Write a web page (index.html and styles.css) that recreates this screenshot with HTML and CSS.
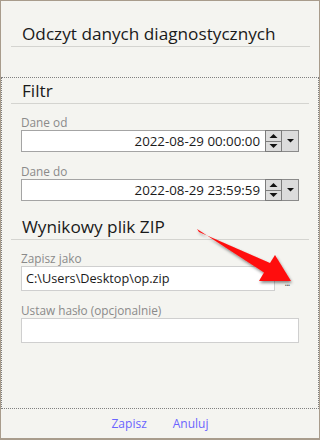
FILE: index.html
```html
<!DOCTYPE html>
<html lang="pl">
<head>
<meta charset="utf-8">
<title>Odczyt danych diagnostycznych</title>
<link rel="stylesheet" href="styles.css">
</head>
<body>
<div class="window">
  <h1 class="title">Odczyt danych diagnostycznych</h1>
  <div class="panel">
    <h2 class="section">Filtr</h2>
    <div class="field">
      <label class="label">Dane od</label>
      <div class="date-row">
        <div class="date-box">2022-08-29 00:00:00</div>
        <div class="spin">
          <span class="spin-btn"><svg width="9" height="6" viewBox="0 0 9 6"><path d="M0.5 5 L4.5 1 L8.5 5 Z" fill="#111"/></svg></span>
          <span class="spin-btn"><svg width="9" height="6" viewBox="0 0 9 6"><path d="M0.5 1 L4.5 5 L8.5 1 Z" fill="#111"/></svg></span>
        </div>
        <div class="drop"><svg width="9" height="6" viewBox="0 0 9 6"><path d="M1 1 L4.5 4.5 L8 1 Z" fill="#111"/></svg></div>
      </div>
    </div>
    <div class="field">
      <label class="label">Dane do</label>
      <div class="date-row">
        <div class="date-box">2022-08-29 23:59:59</div>
        <div class="spin">
          <span class="spin-btn"><svg width="9" height="6" viewBox="0 0 9 6"><path d="M0.5 5 L4.5 1 L8.5 5 Z" fill="#111"/></svg></span>
          <span class="spin-btn"><svg width="9" height="6" viewBox="0 0 9 6"><path d="M0.5 1 L4.5 5 L8.5 1 Z" fill="#111"/></svg></span>
        </div>
        <div class="drop"><svg width="9" height="6" viewBox="0 0 9 6"><path d="M1 1 L4.5 4.5 L8 1 Z" fill="#111"/></svg></div>
      </div>
    </div>
    <h2 class="section section-zip">Wynikowy plik ZIP</h2>
    <div class="field">
      <label class="label">Zapisz jako</label>
      <div class="file-row">
        <div class="text-box text-grow">C:\Users\Desktop\op.zip</div>
        <span class="browse">...</span>
      </div>
    </div>
    <div class="field">
      <label class="label">Ustaw hasło (opcjonalnie)</label>
      <div class="text-box"></div>
    </div>
  </div>
  <div class="footer">
    <span class="link">Zapisz</span>
    <span class="link">Anuluj</span>
  </div>
  <svg class="arrow" width="320" height="440" viewBox="0 0 320 440">
    <defs>
      <filter id="sh" x="-20%" y="-20%" width="140%" height="140%">
        <feDropShadow dx="1" dy="2" stdDeviation="1.6" flood-color="#000" flood-opacity="0.45"/>
      </filter>
    </defs>
    <polygon points="197,229 199,232 270,263 275,255 291,281 259,281 264,272.5" fill="#ff0d0d" filter="url(#sh)"/>
  </svg>
</div>
</body>
</html>
```

FILE: styles.css
```css
* { box-sizing: border-box; }
html, body { margin: 0; padding: 0; }
body {
  width: 320px;
  height: 440px;
  font-family: "Open Sans", "Noto Sans", sans-serif;
  background: #f4f4f0;
}
.window {
  position: relative;
  width: 320px;
  height: 440px;
  background: #f4f4f0;
  border: 1px solid #a89c8c;
  border-bottom-width: 2px;
  display: flex;
  flex-direction: column;
}
.title {
  margin: 21px 9px 0 10px;
  padding: 0 0 0 11px;
  font-size: 17.2px;
  font-weight: 400;
  line-height: 24px;
  color: #1a1a1a;
  border-bottom: 1px solid #d4d4d0;
}
.panel {
  margin-top: 30px;
  flex: 1;
  border: 1px dotted #808080;
  padding-bottom: 0;
}
.section {
  margin: 1px 9px 0 9px;
  padding-left: 11px;
  font-size: 17.2px;
  font-weight: 400;
  line-height: 24px;
  color: #1a1a1a;
  border-bottom: 1px solid #d4d4d0;
}
.section-zip { margin-top: 14px; }
.field {
  margin: 10px 19px 0 19px;
  display: flex;
  flex-direction: column;
}
.field + .field { margin-top: 11px; }
.label {
  font-size: 11.8px;
  line-height: 16px;
  color: #8a8a8a;
}
.date-row {
  display: flex;
  height: 22px;
}
.date-box {
  flex: 1;
  background: #fff;
  border: 1px solid #a4a4a4;
  border-right: 0;
  text-align: right;
  padding-right: 5px;
  font-size: 13.3px;
  line-height: 20px;
  color: #1a1a1a;
}
.spin {
  width: 17px;
  display: flex;
  flex-direction: column;
}
.spin-btn {
  flex: 1;
  background: #dcdcdc;
  border: 1px solid #7c7c7c;
  display: flex;
  align-items: center;
  justify-content: center;
}
.spin-btn + .spin-btn { border-top: 0; }
.drop {
  width: 17px;
  background: #dcdcdc;
  border: 1px solid #8a8a8a;
  border-left: 0;
  display: flex;
  align-items: center;
  justify-content: center;
}
.file-row {
  display: flex;
  align-items: flex-end;
}
.text-box {
  height: 25px;
  background: #fff;
  border: 1px solid #cfcfcf;
  padding-left: 4px;
  font-size: 12.7px;
  line-height: 23px;
  color: #1a1a1a;
}
.text-grow { flex: 1; }
.browse {
  width: 24px;
  text-align: center;
  font-size: 10px;
  line-height: 10px;
  color: #555;
  padding-bottom: 4px;
  letter-spacing: -1px;
}
.footer {
  height: 29px;
  display: flex;
  justify-content: center;
  align-items: center;
  gap: 26px;
}
.link {
  font-size: 12px;
  color: #6a64ff;
}
.arrow {
  position: absolute;
  left: -1px;
  top: -1px;
  pointer-events: none;
}
```
